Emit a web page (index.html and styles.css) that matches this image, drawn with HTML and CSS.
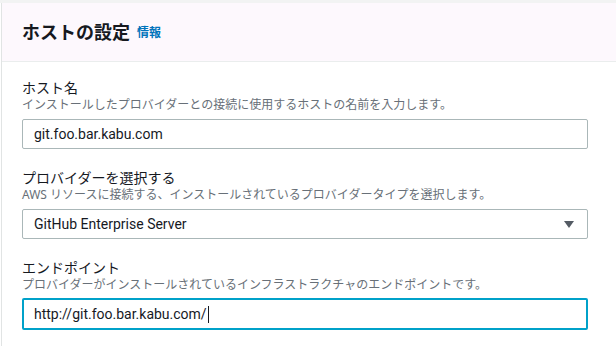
FILE: index.html
```html
<!DOCTYPE html>
<html lang="ja">
<head>
<meta charset="utf-8">
<link rel="stylesheet" href="styles.css">
</head>
<body>
<div class="top-strip"></div>
<div class="panel">
  <div class="panel-header">
    <h2 class="title">ホストの設定</h2>
    <a class="info" href="#">情報</a>
  </div>
  <div class="panel-body">
    <div class="field">
      <div class="label">ホスト名</div>
      <div class="desc">インストールしたプロバイダーとの接続に使用するホストの名前を入力します。</div>
      <div class="input">git.foo.bar.kabu.com</div>
    </div>
    <div class="field">
      <div class="label">プロバイダーを選択する</div>
      <div class="desc">AWS リソースに接続する、インストールされているプロバイダータイプを選択します。</div>
      <div class="input select">
        <span>GitHub Enterprise Server</span>
        <svg class="caret-down" width="10" height="7" viewBox="0 0 10 7"><path d="M0 0 H10 L5 7 Z" fill="#545b64"/></svg>
      </div>
    </div>
    <div class="field">
      <div class="label">エンドポイント</div>
      <div class="desc">プロバイダーがインストールされているインフラストラクチャのエンドポイントです。</div>
      <div class="input focused">http://git.foo.bar.kabu.com/<span class="cursor"></span></div>
    </div>
  </div>
</div>
</body>
</html>
```
FILE: styles.css
```css
html, body {
  margin: 0;
  padding: 0;
  background: #ffffff;
}
body {
  font-family: "Noto Sans", "Noto Sans CJK JP", sans-serif;
  color: #16191f;
}
.top-strip {
  height: 3px;
  background: #f2f3f3;
}
.panel {
  margin-left: 1px;
  border-left: 1px solid #e1e4e4;
  height: 343px;
}
.panel-header {
  background: #fdf8fd;
  border-bottom: 1px solid #eaeded;
  height: 58px;
  display: flex;
  align-items: center;
  padding-left: 20px;
  gap: 7px;
}
.title {
  margin: 0;
  font-size: 18px;
  font-weight: 700;
  line-height: 24px;
}
.info {
  font-size: 12px;
  font-weight: 700;
  color: #0073bb;
  text-decoration: none;
  line-height: 20px;
  padding-top: 2px;
}
.panel-body {
  padding: 16px 28px 0 20px;
  display: flex;
  flex-direction: column;
  gap: 19px;
}
.field {
  display: flex;
  flex-direction: column;
}
.label {
  font-size: 14px;
  line-height: 20px;
  color: #16191f;
}
.desc {
  font-size: 12px;
  line-height: 14px;
  color: #687078;
  margin-bottom: 7px;
}
.input {
  box-sizing: border-box;
  height: 30px;
  border: 1px solid #aab7b8;
  border-radius: 2px;
  padding: 0 11px;
  font-family: Roboto, "Noto Sans CJK JP", sans-serif;
  font-size: 14px;
  line-height: 28px;
  color: #16191f;
  display: flex;
  align-items: center;
}
.select {
  justify-content: space-between;
  padding-right: 13px;
}
.focused {
  border: 2px solid #00a1c9;
  height: 32px;
  margin-top: -1px;
  padding-left: 10px;
}
.cursor {
  display: inline-block;
  width: 1px;
  height: 17px;
  background: #16191f;
  margin-left: 1px;
}
```
